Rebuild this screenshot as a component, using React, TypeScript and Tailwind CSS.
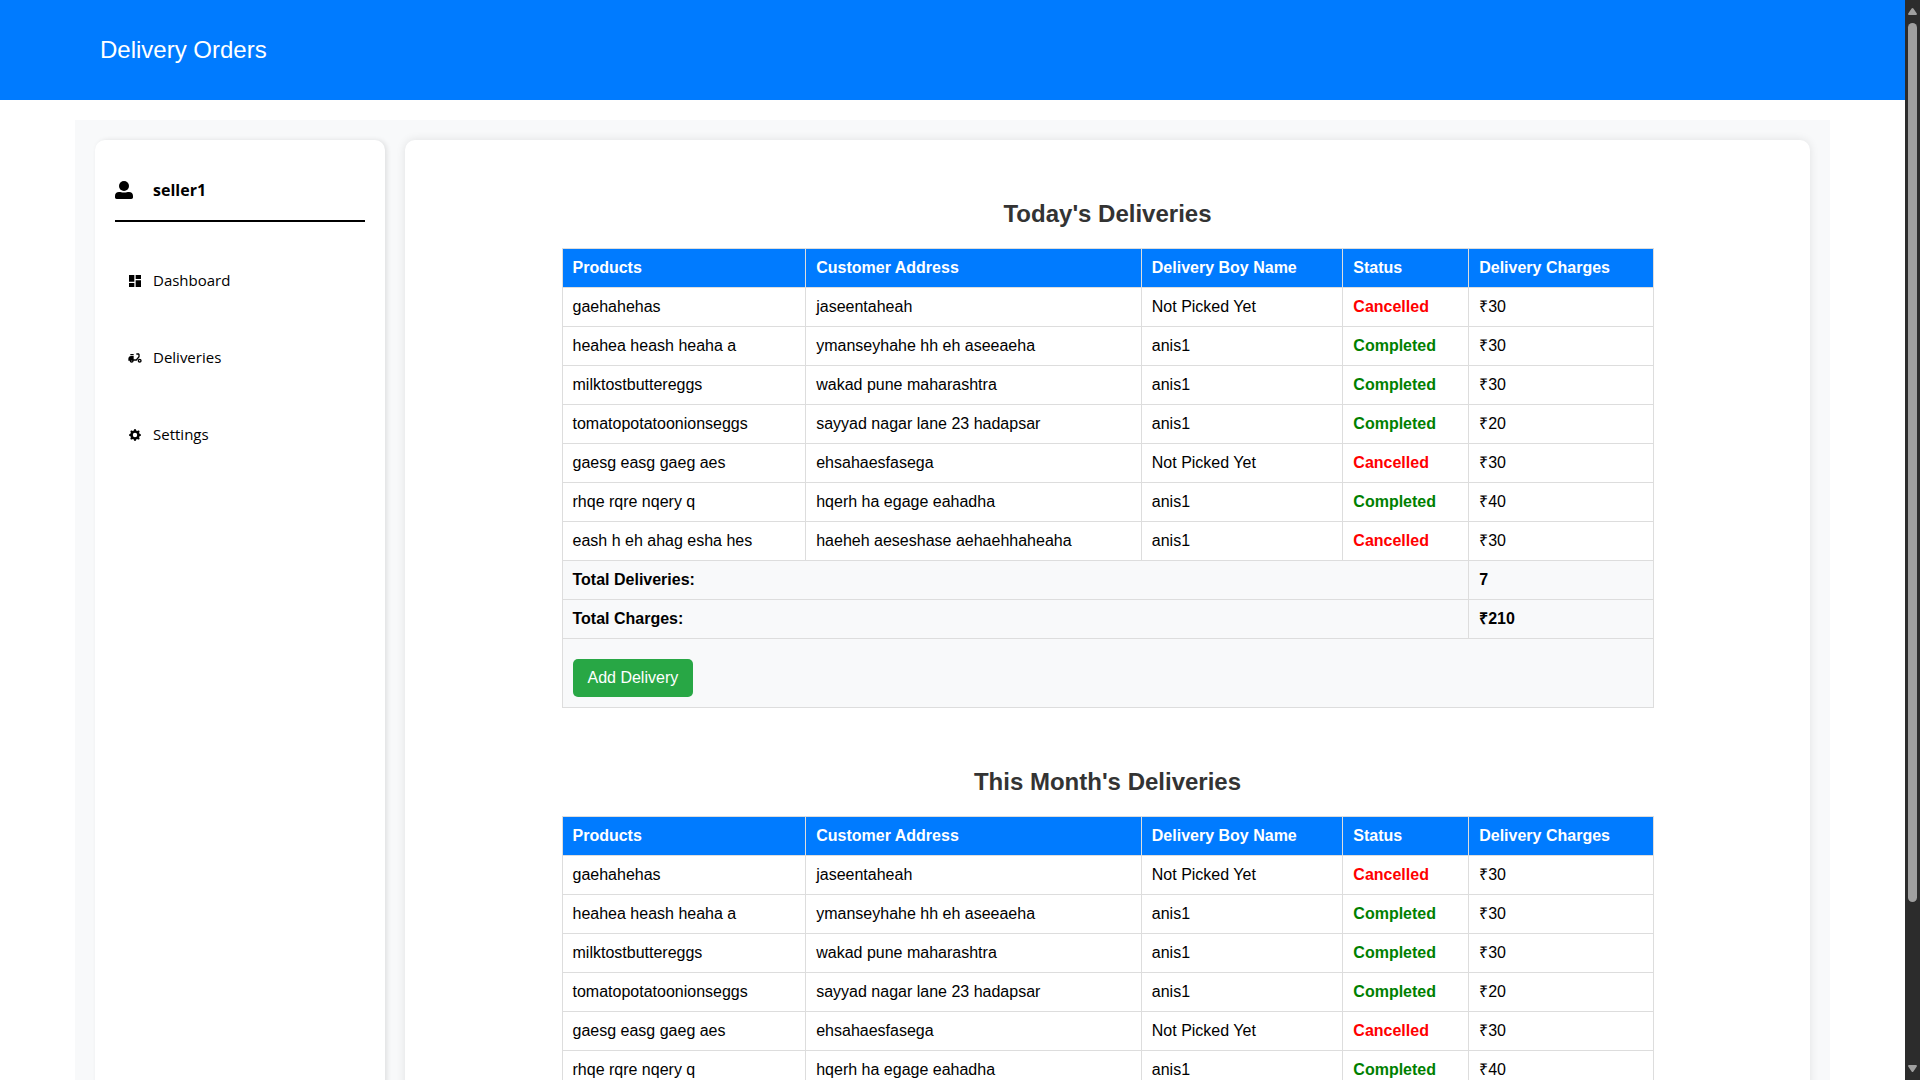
import type { ReactNode } from "react";
import { BsGearFill } from "react-icons/bs";
import { MdDashboard, MdDeliveryDining } from "react-icons/md";

type Status = "Cancelled" | "Completed";

interface Delivery {
  products: string;
  address: string;
  boy: string;
  status: Status;
  charge: number;
}

const deliveries: Delivery[] = [
  { products: "gaehahehas", address: "jaseentaheah", boy: "Not Picked Yet", status: "Cancelled", charge: 30 },
  { products: "heahea heash heaha a", address: "ymanseyhahe hh eh aseeaeha", boy: "anis1", status: "Completed", charge: 30 },
  { products: "milktostbuttereggs", address: "wakad pune maharashtra", boy: "anis1", status: "Completed", charge: 30 },
  { products: "tomatopotatoonionseggs", address: "sayyad nagar lane 23 hadapsar", boy: "anis1", status: "Completed", charge: 20 },
  { products: "gaesg easg gaeg aes", address: "ehsahaesfasega", boy: "Not Picked Yet", status: "Cancelled", charge: 30 },
  { products: "rhqe rqre nqery q", address: "hqerh ha egage eahadha", boy: "anis1", status: "Completed", charge: 40 },
  { products: "eash h eh ahag esha hes", address: "haeheh aeseshase aehaehhaheaha", boy: "anis1", status: "Cancelled", charge: 30 },
];

const headings = ["Products", "Customer Address", "Delivery Boy Name", "Status", "Delivery Charges"];

const statusClass: Record<Status, string> = {
  Cancelled: "text-[#ff0000]",
  Completed: "text-[#008000]",
};

function UserIcon() {
  return (
    <svg viewBox="0 0 18 18" className="size-[18px]" fill="currentColor" aria-hidden="true">
      <circle cx="9" cy="5" r="5" />
      <path d="M4 11C5.800 11 6.500 11.600 9 11.600S12.200 11 14 11C16.500 11 18 12.600 18 15V16.300C18 17.300 17.300 18 16.300 18H1.700C.7 18 0 17.300 0 16.300V15C0 12.600 1.500 11 4 11Z" />
    </svg>
  );
}

function NavItem({ icon, label }: { icon: ReactNode; label: string }) {
  return (
    <li>
      <a href="#" className="flex h-[37px] items-center gap-[10px] px-3 text-[15px]">
        <span className="flex w-4 justify-center">{icon}</span>
        {label}
      </a>
    </li>
  );
}

function DeliveryTable({ title, rows }: { title: string; rows: Delivery[] }) {
  const total = rows.reduce((sum, row) => sum + row.charge, 0);
  const cell = "border border-[#dddddd] p-[10px] text-left";
  return (
    <section>
      <h2 className="text-center text-2xl leading-7 font-bold text-[#333333]">{title}</h2>
      <table className="mx-auto mt-5 w-4/5 border-collapse text-base leading-[18px]">
        <thead>
          <tr className="bg-[#007bff] text-white">
            {headings.map((heading) => (
              <th key={heading} scope="col" className={cell}>
                {heading}
              </th>
            ))}
          </tr>
        </thead>
        <tbody>
          {rows.map((row) => (
            <tr key={row.products}>
              <td className={cell}>{row.products}</td>
              <td className={cell}>{row.address}</td>
              <td className={cell}>{row.boy}</td>
              <td className={cell}>
                <span className={`font-bold ${statusClass[row.status]}`}>{row.status}</span>
              </td>
              <td className={cell}>₹{row.charge}</td>
            </tr>
          ))}
        </tbody>
        <tfoot className="bg-[#f8f9fa]">
          <tr className="font-bold">
            <td colSpan={4} className={cell}>Total Deliveries:</td>
            <td className={cell}>{rows.length}</td>
          </tr>
          <tr className="font-bold">
            <td colSpan={4} className={cell}>Total Charges:</td>
            <td className={cell}>₹{total}</td>
          </tr>
          <tr>
            <td colSpan={5} className={cell}>
              <button type="button" className="mt-[10px] block rounded-[5px] bg-[#28a745] px-[15px] py-[10px] text-white">
                Add Delivery
              </button>
            </td>
          </tr>
        </tfoot>
      </table>
    </section>
  );
}

function Scrollbar() {
  return (
    <div className="flex w-[15px] shrink-0 flex-col items-center bg-[#2c2c2c] py-2" aria-hidden="true">
      <svg viewBox="0 0 9 7" className="h-[7px] w-[9px] shrink-0" fill="#9f9f9f">
        <path d="M4.500 0Q5 0 5.400.6L8.800 5.600Q9.200 7 8 7H1Q-.2 7 .2 5.600L3.600.6Q4 0 4.500 0Z" />
      </svg>
      <div className="my-2 w-[9px] flex-1">
        <div className="h-[85%] rounded-full bg-[#9f9f9f]" />
      </div>
      <svg viewBox="0 0 9 7" className="h-[7px] w-[9px] shrink-0" fill="#9f9f9f">
        <path d="M4.500 7Q5 7 5.400 6.400L8.800 1.400Q9.200 0 8 0H1Q-.2 0 .2 1.400L3.600 6.400Q4 7 4.500 7Z" />
      </svg>
    </div>
  );
}

export default function App() {
  return (
    <div className="flex h-screen bg-white font-['Liberation_Sans',Arial,sans-serif] text-black">
      <div className="min-w-0 flex-1 overflow-y-auto [scrollbar-width:none]">
        <header className="flex h-[100px] items-center bg-[#007bff] px-[100px] text-white">
          <h1 className="text-2xl">Delivery Orders</h1>
        </header>
        <div className="mx-[75px] my-5 flex gap-5 bg-[#f8f9fa] p-5">
          <aside className="w-[290px] shrink-0 rounded-[10px] bg-white p-5 font-['Open_Sans',sans-serif] shadow-[2px_0_5px_rgba(0,0,0,0.1)]">
            <div className="flex h-[62px] items-center gap-5 border-b-2 border-black">
              <UserIcon />
              <span className="text-base font-bold">seller1</span>
            </div>
            <nav>
              <ul className="mt-10 flex flex-col gap-10">
                <NavItem icon={<MdDashboard className="size-4 shrink-0" />} label="Dashboard" />
                <NavItem icon={<MdDeliveryDining className="size-4 shrink-0" />} label="Deliveries" />
                <NavItem icon={<BsGearFill className="size-3 shrink-0" />} label="Settings" />
              </ul>
            </nav>
          </aside>
          <main className="flex min-w-0 flex-1 flex-col gap-[60px] rounded-[10px] bg-white px-5 py-[60px] shadow-[0_0_10px_rgba(0,0,0,0.1)]">
            <DeliveryTable title="Today's Deliveries" rows={deliveries} />
            <DeliveryTable title="This Month's Deliveries" rows={deliveries} />
          </main>
        </div>
      </div>
      <Scrollbar />
    </div>
  );
}
